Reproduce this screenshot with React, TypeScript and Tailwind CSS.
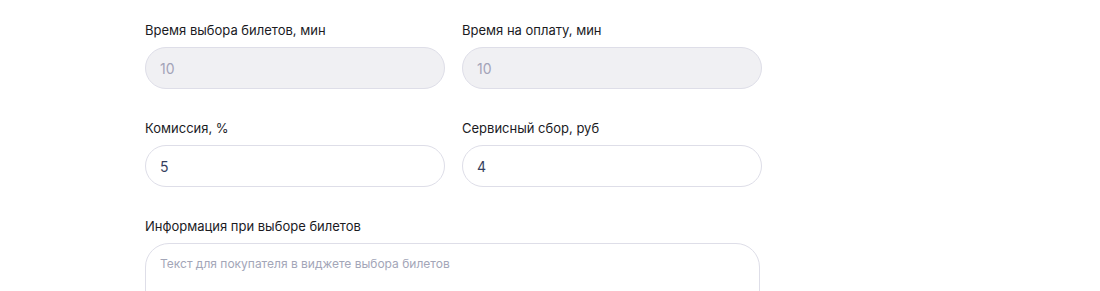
import React from 'react';

function Field({ label, value, disabled }: { label: string; value: string; disabled?: boolean }) {
    return (
        <div className="flex flex-col gap-[7px] w-[300px]">
            <label className="text-[13px] leading-5 text-[#1b1b1f]">{label}</label>
            <input
                readOnly
                value={value}
                disabled={disabled}
                className={
                    disabled
                        ? "h-[42px] rounded-full border border-[#dedee8] bg-[#f0f0f3] px-[14px] text-[14px] text-[#a3a3b8] outline-none"
                        : "h-[42px] rounded-full border border-[#dedee8] bg-white px-[14px] text-[14px] text-[#353f5e] outline-none"
                }
            />
        </div>
    );
}

export default function App() {
    return (
        <div className="w-[1100px] h-[291px] bg-white overflow-hidden font-['Inter',sans-serif]">
            <div className="pl-[145px] pt-[20px] flex flex-col gap-[29px]">
                <div className="flex gap-[17px]">
                    <Field label="Время выбора билетов, мин" value="10" disabled />
                    <Field label="Время на оплату, мин" value="10" disabled />
                </div>
                <div className="flex gap-[17px]">
                    <Field label="Комиссия, %" value="5" />
                    <Field label="Сервисный сбор, руб" value="4" />
                </div>
                <div className="flex flex-col gap-[7px] w-[615px]">
                    <label className="text-[13px] leading-5 text-[#1b1b1f]">Информация при выборе билетов</label>
                    <textarea
                        readOnly
                        placeholder="Текст для покупателя в виджете выбора билетов"
                        className="h-[120px] resize-none rounded-3xl border border-[#dedee8] bg-white px-[14px] py-[10px] text-[12px] leading-5 text-[#353f5e] placeholder:text-[#a3a6b8] outline-none"
                    />
                </div>
            </div>
        </div>
    );
}
